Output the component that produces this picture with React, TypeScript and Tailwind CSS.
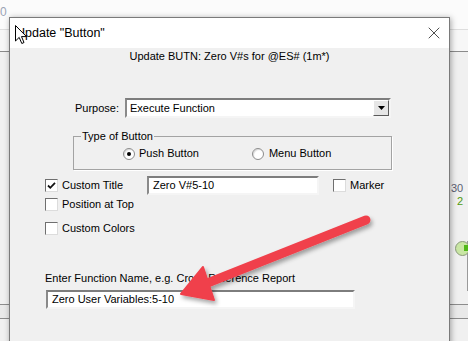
import { X } from "lucide-react";

const FONT = { fontFamily: '"Liberation Sans", Arial, sans-serif' };

function Checkbox({ checked = false }: { checked?: boolean }) {
  return (
    <span className="flex h-[13px] w-[13px] shrink-0 items-center justify-center border border-t-[#6f6f6f] border-l-[#6f6f6f] border-b-[#dcdcdc] border-r-[#dcdcdc] bg-white">
      {checked && (
        <svg width="9" height="9" viewBox="0 0 9 9">
          <path d="M1 4.5 L3.3 6.8 L8 1.8" stroke="#111" strokeWidth="1.8" fill="none" />
        </svg>
      )}
    </span>
  );
}

function Radio({ selected = false }: { selected?: boolean }) {
  return (
    <span className="flex h-[12px] w-[12px] shrink-0 items-center justify-center rounded-full border border-[#8c8c8c] bg-white shadow-[inset_1px_1px_1px_rgba(0,0,0,0.15)]">
      {selected && <span className="h-[4px] w-[4px] rounded-full bg-black" />}
    </span>
  );
}

function TextBox({ value, className }: { value: string; className: string }) {
  return (
    <div
      className={`flex items-center border-2 border-t-[#7d7d7d] border-l-[#8a8a8a] border-b-[#f5f5f5] border-r-[#f5f5f5] bg-white pl-[4px] text-[11px] text-black ${className}`}
    >
      {value}
    </div>
  );
}

function Arrow() {
  return (
    <svg className="pointer-events-none absolute left-0 top-0" width="468" height="341">
      <defs>
        <filter id="arrowShadow" x="-20%" y="-20%" width="140%" height="160%">
          <feDropShadow dx="2" dy="3" stdDeviation="2" floodColor="#000" floodOpacity="0.35" />
        </filter>
      </defs>
      <g filter="url(#arrowShadow)">
        <line x1="366" y1="220" x2="205" y2="284" stroke="#f0404b" strokeWidth="9" strokeLinecap="round" />
        <path d="M181 294 L203 267 L214 300 Z" fill="#f0404b" stroke="#f0404b" strokeWidth="2" strokeLinejoin="round" />
      </g>
    </svg>
  );
}

function Cursor() {
  return (
    <svg className="absolute left-[15px] top-[25px]" width="13" height="20" viewBox="0 0 13 20">
      <path
        d="M0.5 0.5 L0.5 16 L4.2 12.4 L6.8 18.5 L9 17.5 L6.5 11.6 L11.5 11.6 Z"
        fill="#fff"
        stroke="#000"
        strokeWidth="1"
        strokeLinejoin="round"
      />
    </svg>
  );
}

function Background() {
  return (
    <div className="flex h-full w-full flex-col">
      <div className="h-[29px] bg-[#fbfbfb] pt-[6px] text-[12px] leading-none text-[#9aa3b5]">
        <span>0</span>
      </div>
      <div className="h-px bg-[#dedede]" />
      <div className="h-[21px] bg-[#f7f7f7]" />
      <div className="h-px bg-[#8a8a8a]" />
      <div className="flex flex-1 flex-col bg-[#f0f0f0]">
        <div className="flex h-[252px] justify-end">
          <div className="flex w-[17px] flex-col pt-[131px] text-[11px] leading-[11px]">
            <span className="text-[#5b5f73]">30</span>
            <span className="mt-[2px] pl-[6px] text-[#4f9a10]">2</span>
            <div className="relative mt-[34px] h-[50px] border-r border-[#9a9a9a]">
              <span className="absolute left-[4px] top-0 h-[15px] w-[15px] rounded-full border border-[#8a9a7a] bg-[#c9e6a4]" />
              <span className="absolute left-[13px] top-[4px] h-[6px] w-[5px] bg-[#52b81a]" />
            </div>
          </div>
        </div>
        <div className="h-px bg-[#8c8c8c]" />
        <div className="h-[13px] bg-[#e9e9e9]" />
        <div className="h-px bg-[#8c8c8c]" />
        <div className="flex-1" />
      </div>
    </div>
  );
}

export default function App() {
  return (
    <div className="relative h-[341px] w-[468px] overflow-hidden bg-white" style={FONT}>
      <Background />

      {/* dialog window */}
      <div className="absolute left-[9px] top-[17px] flex h-[340px] w-[441px] flex-col border border-[#7a7a7a] bg-[#f0f0f0] shadow-[1px_1px_6px_rgba(0,0,0,0.35)]">
        <div className="flex h-[30px] items-center justify-between bg-white pl-[6px] pr-[5px] text-[12.5px] text-black">
          <span>Update "Button"</span>
          <X className="h-[20px] w-[20px] text-[#111]" strokeWidth={0.9} />
        </div>

        <div className="flex flex-col text-[11px] leading-[13px] text-black">
          <div className="mt-[2px] text-center">Update BUTN: Zero V#s for @ES# (1m*)</div>

          <div className="mt-[35px] flex items-center">
            <span className="w-[110px] pr-[1px] text-right">Purpose:</span>
            <div className="ml-[5px] flex h-[20px] w-[266px] items-center justify-between border-2 border-t-[#7d7d7d] border-l-[#8a8a8a] border-b-[#f5f5f5] border-r-[#f5f5f5] bg-white">
              <span className="pl-[3px]">Execute Function</span>
              <span className="flex h-[16px] w-[16px] items-center justify-center border border-t-[#fff] border-l-[#fff] border-b-[#5a5a5a] border-r-[#5a5a5a] bg-[#e6e6e6]">
                <svg width="7" height="4" viewBox="0 0 7 4">
                  <path d="M0 0 L7 0 L3.5 4 Z" fill="#000" />
                </svg>
              </span>
            </div>
          </div>

          <fieldset className="ml-[63px] mt-[12px] h-[40px] w-[319px] border border-[#a3a3a3] pl-[7px] shadow-[1px_1px_0_#fff]">
            <legend className="px-[1px]">Type of Button</legend>
            <div className="mt-[4px] flex items-center">
              <span className="ml-[42px] flex items-center gap-[4px]">
                <Radio selected />
                Push Button
              </span>
              <span className="ml-[53px] flex items-center gap-[5px]">
                <Radio />
                Menu Button
              </span>
            </div>
          </fieldset>

          <div className="mt-[6px] flex items-center">
            <span className="ml-[35px] flex w-[102px] items-center gap-[4px]">
              <Checkbox checked />
              Custom Title
            </span>
            <TextBox value="Zero V#5-10" className="h-[19px] w-[172px]" />
            <span className="ml-[14px] flex items-center gap-[4px]">
              <Checkbox />
              Marker
            </span>
          </div>

          <div className="ml-[35px] mt-[3px] flex items-center gap-[4px]">
            <Checkbox />
            Position at Top
          </div>

          <div className="ml-[35px] mt-[11px] flex items-center gap-[4px]">
            <Checkbox />
            Custom Colors
          </div>

          <div className="ml-[35px] mt-[37px]">Enter Function Name, e.g. Cross Reference Report</div>

          <TextBox value="Zero User Variables:5-10" className="ml-[36px] mt-[5px] h-[19px] w-[309px]" />
        </div>
      </div>

      <Cursor />
      <Arrow />
    </div>
  );
}
